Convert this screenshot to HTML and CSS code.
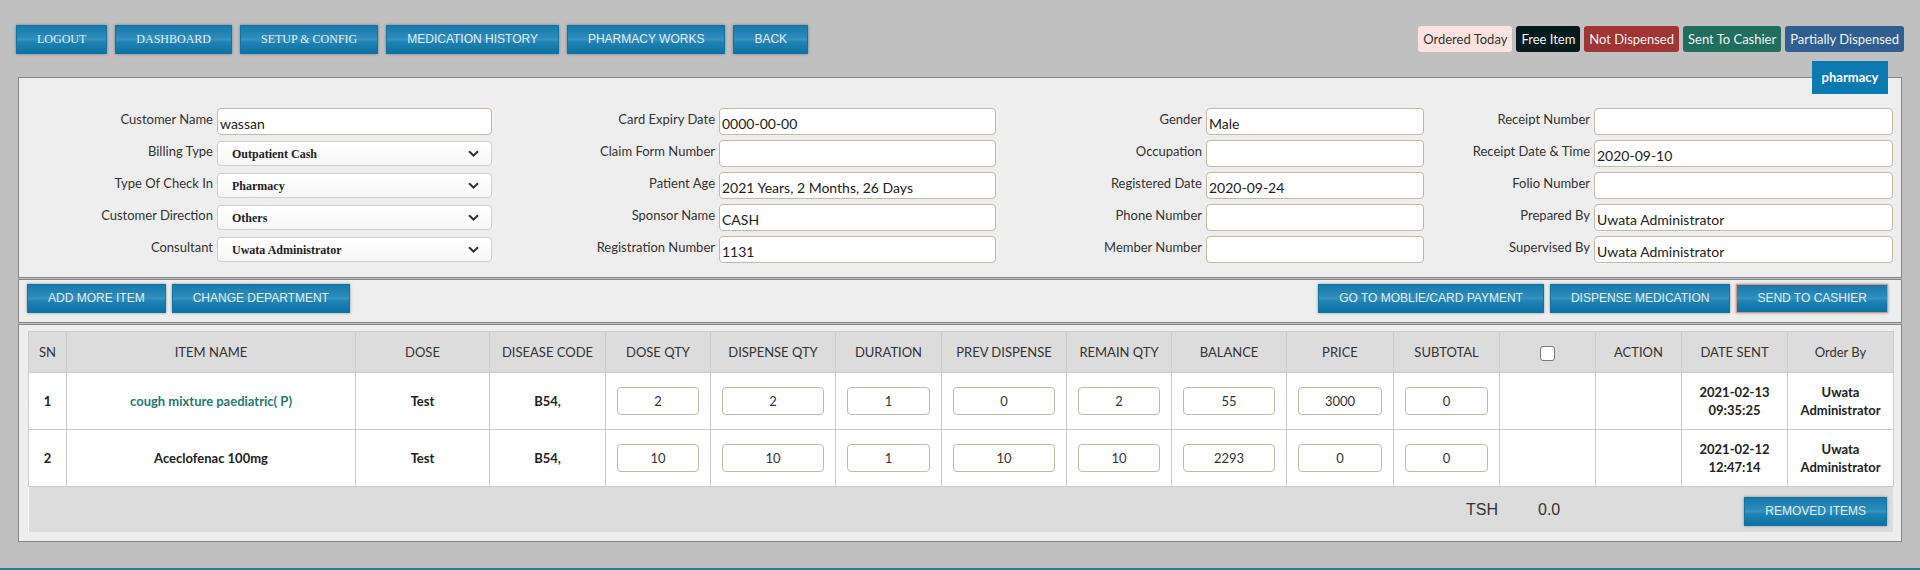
FILE: index.html
```html
<!DOCTYPE html>
<html lang="en">
<head>
<meta charset="utf-8">
<title>Pharmacy</title>
<link rel="stylesheet" href="styles.css">
</head>
<body>
<div class="topbar">
  <div class="nav">
    <button class="btn serif">LOGOUT</button>
    <button class="btn serif">DASHBOARD</button>
    <button class="btn serif">SETUP &amp; CONFIG</button>
    <button class="btn">MEDICATION HISTORY</button>
    <button class="btn">PHARMACY WORKS</button>
    <button class="btn">BACK</button>
  </div>
  <div class="legend">
    <span class="tag t-today">Ordered Today</span>
    <span class="tag t-free">Free Item</span>
    <span class="tag t-not">Not Dispensed</span>
    <span class="tag t-sent">Sent To Cashier</span>
    <span class="tag t-part">Partially Dispensed</span>
  </div>
</div>

<div class="panel">
  <span class="badge">pharmacy</span>
  <div class="box form-box">
    <div class="form-grid">
      <label class="lbl">Customer Name</label>
      <input class="inp" type="text" value="wassan">
      <label class="lbl">Card Expiry Date</label>
      <input class="inp" type="text" value="0000-00-00">
      <label class="lbl">Gender</label>
      <input class="inp" type="text" value="Male">
      <label class="lbl">Receipt Number</label>
      <input class="inp" type="text" value="">

      <label class="lbl">Billing Type</label>
      <div class="sel"><select><option>Outpatient Cash</option></select><svg class="chev" width="11" height="7" viewBox="0 0 11 7"><path d="M1 1.2 L5.5 5.5 L10 1.2" fill="none" stroke="#333" stroke-width="2"/></svg></div>
      <label class="lbl">Claim Form Number</label>
      <input class="inp" type="text" value="">
      <label class="lbl">Occupation</label>
      <input class="inp" type="text" value="">
      <label class="lbl">Receipt Date &amp; Time</label>
      <input class="inp" type="text" value="2020-09-10">

      <label class="lbl">Type Of Check In</label>
      <div class="sel"><select><option>Pharmacy</option></select><svg class="chev" width="11" height="7" viewBox="0 0 11 7"><path d="M1 1.2 L5.5 5.5 L10 1.2" fill="none" stroke="#333" stroke-width="2"/></svg></div>
      <label class="lbl">Patient Age</label>
      <input class="inp" type="text" value="2021 Years, 2 Months, 26 Days">
      <label class="lbl">Registered Date</label>
      <input class="inp" type="text" value="2020-09-24">
      <label class="lbl">Folio Number</label>
      <input class="inp" type="text" value="">

      <label class="lbl">Customer Direction</label>
      <div class="sel"><select><option>Others</option></select><svg class="chev" width="11" height="7" viewBox="0 0 11 7"><path d="M1 1.2 L5.5 5.5 L10 1.2" fill="none" stroke="#333" stroke-width="2"/></svg></div>
      <label class="lbl">Sponsor Name</label>
      <input class="inp" type="text" value="CASH">
      <label class="lbl">Phone Number</label>
      <input class="inp" type="text" value="">
      <label class="lbl">Prepared By</label>
      <input class="inp" type="text" value="Uwata Administrator">

      <label class="lbl">Consultant</label>
      <div class="sel"><select><option>Uwata Administrator</option></select><svg class="chev" width="11" height="7" viewBox="0 0 11 7"><path d="M1 1.2 L5.5 5.5 L10 1.2" fill="none" stroke="#333" stroke-width="2"/></svg></div>
      <label class="lbl">Registration Number</label>
      <input class="inp" type="text" value="1131">
      <label class="lbl">Member Number</label>
      <input class="inp" type="text" value="">
      <label class="lbl">Supervised By</label>
      <input class="inp" type="text" value="Uwata Administrator">
    </div>
  </div>

  <div class="box actions">
    <div class="group">
      <button class="btn">ADD MORE ITEM</button>
      <button class="btn">CHANGE DEPARTMENT</button>
    </div>
    <div class="group">
      <button class="btn">GO TO MOBLIE/CARD PAYMENT</button>
      <button class="btn">DISPENSE MEDICATION</button>
      <button class="btn focus">SEND TO CASHIER</button>
    </div>
  </div>

  <div class="box table-box">
    <table class="items">
      <colgroup>
        <col class="c-sn"><col class="c-name"><col class="c-dose"><col class="c-code"><col class="c-dq"><col class="c-disp"><col class="c-dur"><col class="c-prev"><col class="c-rem"><col class="c-bal"><col class="c-price"><col class="c-sub"><col class="c-chk"><col class="c-act"><col class="c-date"><col class="c-by">
      </colgroup>
      <thead>
        <tr>
          <th>SN</th><th>ITEM NAME</th><th>DOSE</th><th>DISEASE CODE</th><th>DOSE QTY</th><th>DISPENSE QTY</th><th>DURATION</th><th>PREV DISPENSE</th><th>REMAIN QTY</th><th>BALANCE</th><th>PRICE</th><th>SUBTOTAL</th><th><input class="chk" type="checkbox"></th><th>ACTION</th><th>DATE SENT</th><th>Order By</th>
        </tr>
      </thead>
      <tbody>
        <tr>
          <td>1</td><td class="teal">cough mixture paediatric( P)</td><td>Test</td><td>B54,</td>
          <td class="ic"><input class="cell-inp" value="2"></td>
          <td class="ic"><input class="cell-inp" value="2"></td>
          <td class="ic"><input class="cell-inp" value="1"></td>
          <td class="ic"><input class="cell-inp" value="0"></td>
          <td class="ic"><input class="cell-inp" value="2"></td>
          <td class="ic"><input class="cell-inp" value="55"></td>
          <td class="ic"><input class="cell-inp" value="3000"></td>
          <td class="ic"><input class="cell-inp" value="0"></td>
          <td></td><td></td>
          <td>2021-02-13<br>09:35:25</td><td>Uwata<br>Administrator</td>
        </tr>
        <tr>
          <td>2</td><td>Aceclofenac 100mg</td><td>Test</td><td>B54,</td>
          <td class="ic"><input class="cell-inp" value="10"></td>
          <td class="ic"><input class="cell-inp" value="10"></td>
          <td class="ic"><input class="cell-inp" value="1"></td>
          <td class="ic"><input class="cell-inp" value="10"></td>
          <td class="ic"><input class="cell-inp" value="10"></td>
          <td class="ic"><input class="cell-inp" value="2293"></td>
          <td class="ic"><input class="cell-inp" value="0"></td>
          <td class="ic"><input class="cell-inp" value="0"></td>
          <td></td><td></td>
          <td>2021-02-12<br>12:47:14</td><td>Uwata<br>Administrator</td>
        </tr>
      </tbody>
    </table>
    <div class="totals">
      <span class="tsh">TSH</span>
      <span class="amount">0.0</span>
      <button class="btn removed">REMOVED ITEMS</button>
    </div>
  </div>
</div>
<div class="bottom-line"></div>
</body>
</html>
```

FILE: styles.css
```css
html, body {
  margin: 0;
  padding: 0;
}
body {
  background: #c0c0c0;
  font-family: Lato, "Noto Sans", sans-serif;
  font-size: 13px;
  color: #333;
  overflow: hidden;
}

.topbar {
  display: flex;
  justify-content: space-between;
  align-items: flex-start;
  padding: 25px 16px 0 16px;
  height: 29px;
}
.nav {
  display: flex;
  gap: 8px;
}
.btn {
  height: 29px;
  padding: 0 20px;
  border: 1px solid #1572a0;
  background: linear-gradient(to bottom, #157aab 0%, #2b8aba 40%, #3493c0 50%, #1f82b3 60%, #0a72a4 100%);
  color: #e4edf2;
  font-family: "Liberation Sans", Arial, sans-serif;
  font-size: 12px;
  font-weight: 400;
  line-height: 27px;
  box-shadow: 0 0 3px rgba(0, 0, 0, 0.35);
  cursor: pointer;
  white-space: nowrap;
}
.btn.serif {
  font-family: "Liberation Serif", "Times New Roman", serif;
  font-size: 12px;
}
.btn.focus {
  border-color: #e58f7c;
}

.legend {
  display: flex;
  gap: 4px;
  margin-top: 1px;
}
.tag {
  display: inline-block;
  height: 26px;
  line-height: 26px;
  padding: 0 5px;
  border-radius: 3px;
  font-size: 13px;
  color: #f2f2f2;
  white-space: nowrap;
}
.t-today { background: #fde3df; color: #333; }
.t-free { background: #041b1e; }
.t-not { background: #a03533; }
.t-sent { background: #1f6e5e; }
.t-part { background: #2e5f90; }

.panel {
  position: relative;
  margin: 23px 18px 0 18px;
}
.badge {
  position: absolute;
  top: -16px;
  right: 14px;
  width: 76px;
  height: 33px;
  line-height: 33px;
  text-align: center;
  background: #0b7ab0;
  color: #fff;
  font-weight: 700;
  font-size: 13px;
  z-index: 2;
}
.box {
  border: 1px solid #858585;
  background: #eeeeee;
}
.box + .box {
  margin-top: 1px;
}

.form-box {
  padding: 30px 0 14px 0;
}
.form-grid {
  display: grid;
  grid-template-columns: 198px 275px 227px 277px 210px 218px 170px 299px;
  grid-auto-rows: 27px;
  row-gap: 5px;
}
.lbl {
  text-align: right;
  padding: 3px 4px 0 0;
  font-size: 13px;
  color: #333;
  white-space: nowrap;
}
.inp {
  box-sizing: border-box;
  height: 27px;
  width: 100%;
  margin: 0;
  border: 1px solid #c3bb9f;
  border-radius: 4px;
  background: #fff;
  padding: 3px 2px 0 2px;
  font-family: Lato, "Noto Sans", sans-serif;
  font-size: 14px;
  color: #222;
}
.sel {
  position: relative;
  padding-top: 1px;
}
.sel select {
  appearance: none;
  -webkit-appearance: none;
  box-sizing: border-box;
  width: 100%;
  height: 25px;
  margin: 0;
  border: 1px solid #cfcfcf;
  border-radius: 4px;
  background: linear-gradient(#ffffff, #f7f7f7);
  padding: 0 0 0 14px;
  font-family: "Liberation Serif", "Times New Roman", serif;
  font-size: 12px;
  font-weight: 700;
  color: #222;
}
.chev {
  position: absolute;
  right: 13px;
  top: 10px;
  pointer-events: none;
}

.actions {
  display: flex;
  justify-content: space-between;
  padding: 4px 13px 9px 8px;
}
.group {
  display: flex;
  gap: 6px;
}

.table-box {
  padding: 6px 8px 9px 9px;
}
.items {
  width: 1865px;
  table-layout: fixed;
  border-collapse: collapse;
  background: #fff;
}
.c-sn { width: 38px; }
.c-name { width: 289px; }
.c-dose { width: 134px; }
.c-code { width: 116px; }
.c-dq { width: 105px; }
.c-disp { width: 125px; }
.c-dur { width: 106px; }
.c-prev { width: 125px; }
.c-rem { width: 105px; }
.c-bal { width: 115px; }
.c-price { width: 107px; }
.c-sub { width: 106px; }
.c-chk { width: 96px; }
.c-act { width: 86px; }
.c-date { width: 106px; }
.c-by { width: 106px; }

.items th {
  height: 40px;
  background: #dcdcdc;
  border: 1px solid #cccccc;
  font-weight: 400;
  font-size: 13px;
  color: #333;
  text-align: center;
  padding: 0;
}
.items td {
  height: 56px;
  border: 1px solid #cccccc;
  text-align: center;
  font-weight: 700;
  font-size: 13px;
  line-height: 18px;
  color: #222;
  padding: 0 4px;
}
.items td.ic {
  padding: 0 11px 0 11px;
}
.items td.teal {
  color: #287873;
}
.cell-inp {
  box-sizing: border-box;
  width: 100%;
  height: 28px;
  margin: 0;
  border: 1px solid #c3bb9f;
  border-radius: 4px;
  background: #fff;
  text-align: center;
  font-family: Lato, "Noto Sans", sans-serif;
  font-size: 13px;
  color: #333;
  padding: 0;
}
.chk {
  appearance: none;
  -webkit-appearance: none;
  width: 15px;
  height: 15px;
  margin: 2px 0 0 0;
  border: 1px solid #7a7a7a;
  border-radius: 3px;
  background: #fff;
  vertical-align: middle;
}

.totals {
  display: flex;
  align-items: center;
  height: 45px;
  background: #dcdcdc;
  border-left: 1px solid #ffffff;
  box-sizing: border-box;
  font-family: "Liberation Sans", Arial, sans-serif;
  font-size: 16px;
  color: #333;
}
.tsh {
  margin-left: 1437px;
}
.amount {
  margin-left: 40px;
}
.btn.removed {
  margin-left: auto;
  margin-right: 6px;
  margin-top: 3px;
  height: 29px;
}

.bottom-line {
  margin-top: 26px;
  height: 2px;
  background: #2b7b9c;
}
```
